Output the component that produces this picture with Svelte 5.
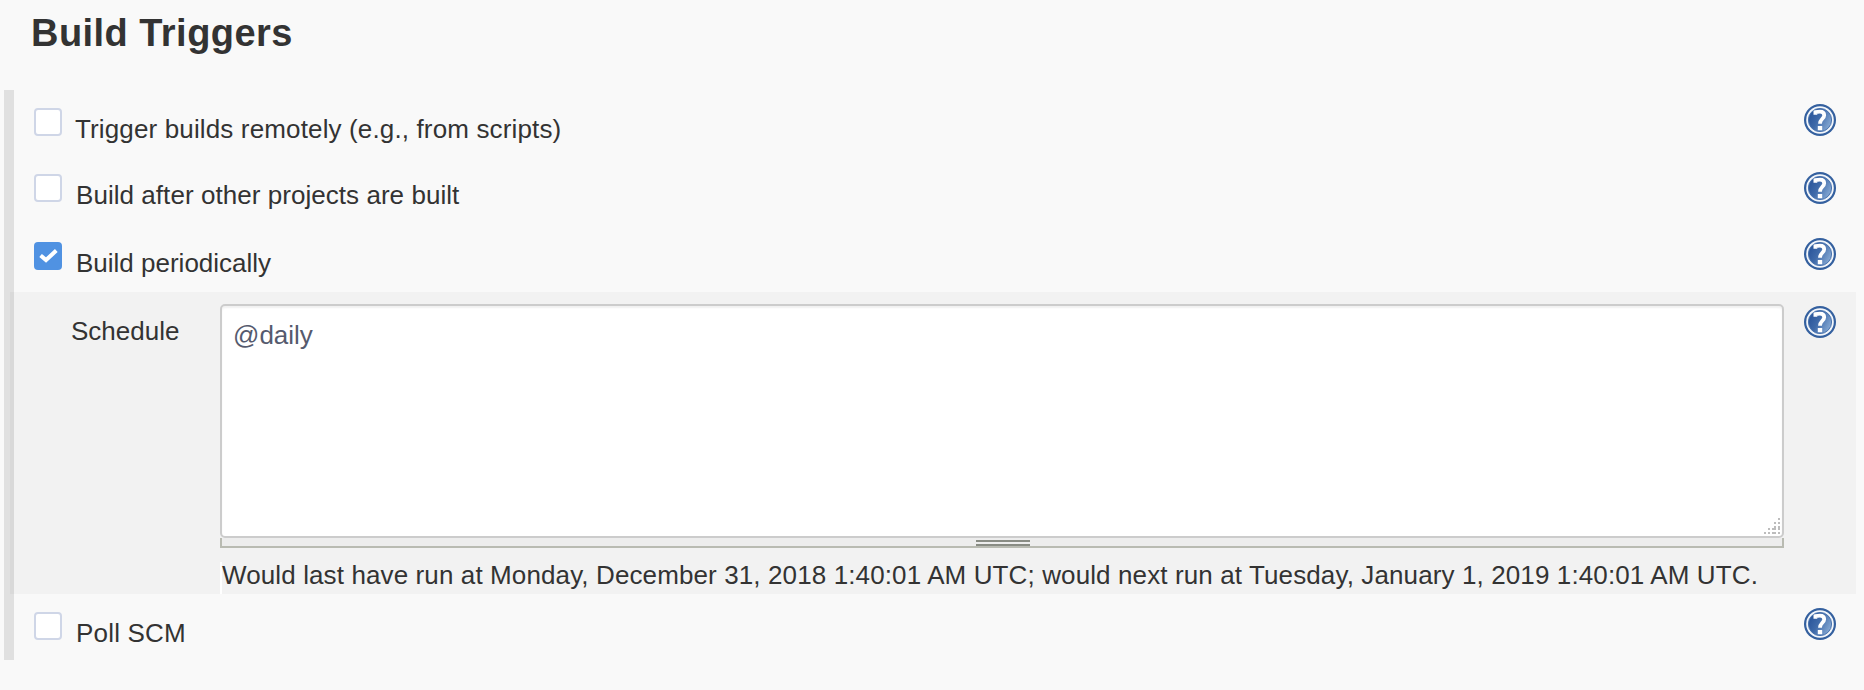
<script>
  const before = [
    { label: 'Trigger builds remotely (e.g., from scripts)', checked: false, cls: 'first' },
    { label: 'Build after other projects are built', checked: false, cls: 'second' },
    { label: 'Build periodically', checked: true, cls: 'third' }
  ];
  const after = [{ label: 'Poll SCM', checked: false, cls: 'poll' }];
</script>

{#snippet help()}
  <svg class="help" viewBox="0 0 32 32" role="img" aria-label="Help">
    <defs>
      <linearGradient id="shade" x1="0" y1="0.3" x2="1" y2="0.8">
        <stop offset="0" stop-color="#2a559a" />
        <stop offset="0.4" stop-color="#3f6aa9" />
        <stop offset="1" stop-color="#8eb0d8" />
      </linearGradient>
    </defs>
    <circle cx="16" cy="16" r="16" fill="#34609f" />
    <circle cx="16" cy="16" r="13.8" fill="#f4f7fb" />
    <circle cx="16" cy="16" r="11.6" fill="url(#shade)" stroke="#4a74af" stroke-width="1" />
    <path d="M11.4 10.8 V8.2 Q13.5 7.6 16 7.6 C18.8 7.6 20.2 9 20.2 11.2 C20.2 14.8 16 14.8 16 19.8" fill="none" stroke="#fff" stroke-width="3.8" />
    <rect x="13.8" y="22" width="4.4" height="4.2" fill="#fff" />
  </svg>
{/snippet}

{#snippet row(item)}
  <div class="row {item.cls}">
    <label>
      <span class="box" class:checked={item.checked}>
        {#if item.checked}
          <svg viewBox="0 0 28 28"><path d="M6.6 13.4 L12 18 L22.3 8.6" fill="none" stroke="#fff" stroke-width="4" /></svg>
        {/if}
      </span>
      <span class="text">{item.label}</span>
    </label>
    {@render help()}
  </div>
{/snippet}

<main>
  <h1>Build Triggers</h1>
  <section>
    {#each before as item}{@render row(item)}{/each}
    <div class="schedule">
      <span class="name">Schedule</span>
      <div class="field">
        <div class="area">
          <span class="value">@daily</span>
          <svg class="grip" viewBox="0 0 18 18">
            {#each [[14, 0], [10, 4], [14, 4], [10, 8], [14, 8], [4, 10], [8, 10], [10, 10], [14, 10], [0, 14], [4, 14], [8, 14], [10, 14], [14, 14]] as [x, y]}
              <rect {x} {y} width="2" height="2" />
            {/each}
          </svg>
        </div>
        <div class="handle"><i></i></div>
        <p>Would last have run at Monday, December 31, 2018 1:40:01 AM UTC; would next run at Tuesday, January 1, 2019 1:40:01 AM UTC.</p>
      </div>
      {@render help()}
    </div>
    {#each after as item}{@render row(item)}{/each}
  </section>
</main>

<style>
  :global(body) { background: #f9f9f9; }
  main {
    box-sizing: border-box;
    height: 690px;
    padding: 12px 8px 0 4px;
    font: 26px/30px "Liberation Sans", Arial, sans-serif;
    color: #333;
    white-space: nowrap;
  }
  h1 {
    margin: 0 0 0 27px;
    height: 78px;
    font-size: 38px;
    line-height: 42px;
    font-weight: bold;
    letter-spacing: 0.46px;
  }
  section {
    box-sizing: border-box;
    height: 570px;
    background: linear-gradient(#e0e0e0, #e0e0e0) 0 0 / 10px 100% no-repeat;
  }
  .row {
    display: flex;
    box-sizing: border-box;
    align-items: flex-start;
    justify-content: space-between;
    padding: 18px 20px 0 30px;
  }
  .first { height: 66px; }
  .second { height: 68px; }
  .third { height: 68px; }
  .poll { height: 66px; }
  label { display: flex; }
  .box {
    box-sizing: border-box;
    width: 28px;
    height: 28px;
    border: 2px solid #cfd6e7;
    border-radius: 4px;
    background: #fff;
  }
  .checked { border: 0; background: #5092e2; }
  .checked svg { display: block; width: 28px; height: 28px; }
  .text { margin: 6px 0 0 14px; }
  .first .text { margin-left: 13px; letter-spacing: 0.14px; }
  .second .text { letter-spacing: 0.05px; }
  .third .text { letter-spacing: 0; }
  .poll .text { letter-spacing: 0.2px; }
  .help { flex: none; display: block; width: 32px; height: 32px; margin-top: -4px; }
  .second .help { margin-top: -2px; }
  .schedule {
    box-sizing: border-box;
    display: flex;
    height: 302px;
    margin-left: 6px;
    padding-top: 12px;
    background: rgba(0, 0, 0, 0.028);
  }
  .name { width: 149px; padding: 12px 0 0 61px; }
  .field { width: 1564px; }
  .area {
    box-sizing: border-box;
    display: flex;
    justify-content: space-between;
    height: 234px;
    border: 2px solid #ccc;
    border-radius: 5px;
    background: #fff;
    box-shadow: inset 0 2px 2px rgba(0, 0, 0, 0.06);
    color: #555a6e;
  }
  .value { padding: 14px 0 0 11px; }
  .grip { align-self: flex-end; width: 18px; height: 18px; fill: #bdbdbd; }
  .handle {
    box-sizing: border-box;
    display: flex;
    justify-content: center;
    height: 10px;
    padding-left: 2px;
    border: solid #b9bbb2;
    border-width: 0 2px 2px;
    background: #ededed;
  }
  .handle i {
    box-sizing: border-box;
    width: 54px;
    height: 6px;
    margin-top: 2px;
    border: solid #898c84;
    border-width: 2px 0;
  }
  p {
    box-sizing: border-box;
    height: 32px;
    margin: 14px 0 0;
    border-left: 2px solid #fff;
    line-height: 26px;
    letter-spacing: 0.115px;
  }
  .schedule .help { margin: 2px 0 0 20px; }
</style>
